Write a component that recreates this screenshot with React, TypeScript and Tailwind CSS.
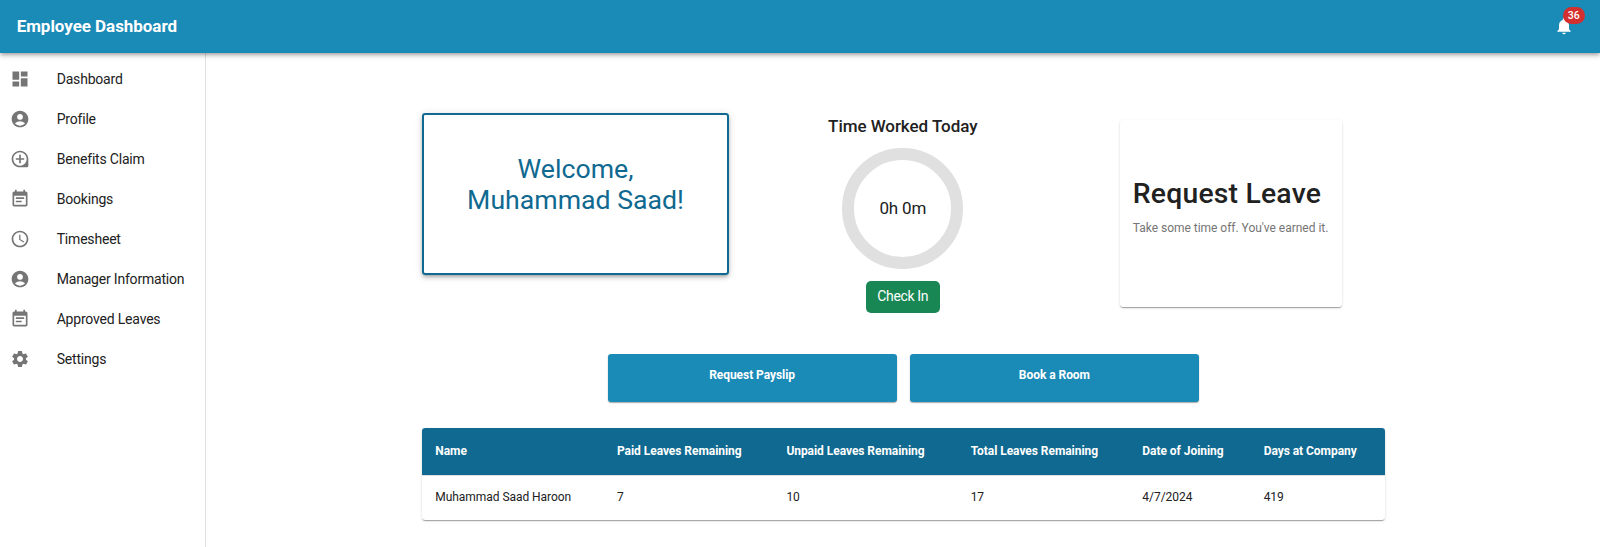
import type { ReactNode } from "react";
import type { IconType } from "react-icons";
import {
  MdAccessTime,
  MdAccountCircle,
  MdDashboard,
  MdEventNote,
  MdLoupe,
  MdNotifications,
  MdSettings,
} from "react-icons/md";

const menu: { label: string; Icon: IconType }[] = [
  { label: "Dashboard", Icon: MdDashboard },
  { label: "Profile", Icon: MdAccountCircle },
  { label: "Benefits Claim", Icon: MdLoupe },
  { label: "Bookings", Icon: MdEventNote },
  { label: "Timesheet", Icon: MdAccessTime },
  { label: "Manager Information", Icon: MdAccountCircle },
  { label: "Approved Leaves", Icon: MdEventNote },
  { label: "Settings", Icon: MdSettings },
];

const columns = [
  { title: "Name", value: "Muhammad Saad Haroon" },
  { title: "Paid Leaves Remaining", value: "7" },
  { title: "Unpaid Leaves Remaining", value: "10" },
  { title: "Total Leaves Remaining", value: "17" },
  { title: "Date of Joining", value: "4/7/2024" },
  { title: "Days at Company", value: "419" },
];

function Header() {
  return (
    <header className="relative z-10 flex h-[52.5px] shrink-0 items-center justify-between bg-[#1a8ab7] pr-[26px] pl-[16.7px] text-white shadow-[0_2px_3px_-1px_rgba(0,0,0,0.2),0_3px_4px_0_rgba(0,0,0,0.14),0_1px_8px_0_rgba(0,0,0,0.12)]">
      <h1 className="text-[17px] font-bold tracking-[-0.003em]">Employee Dashboard</h1>
      <button className="relative size-5" aria-label="Notifications">
        <MdNotifications size={20} />
        <span className="absolute -top-[9px] left-[9px] flex h-[16.67px] w-[21.5px] items-center justify-center rounded-full bg-[#d32f2f] text-[10.5px] font-medium">
          36
        </span>
      </button>
    </header>
  );
}

function Sidebar() {
  return (
    <nav className="w-[206px] shrink-0 border-r border-[#e0e0e0] pt-[6.8px]">
      {menu.map(({ label, Icon }) => (
        <a key={label} className="flex h-10 items-center pl-[10px]">
          <Icon size={20} className="mr-[26.7px] text-[#757575]" />
          <span className="pt-px text-[14px] tracking-[-0.014em]">{label}</span>
        </a>
      ))}
    </nav>
  );
}

function ActionButton({ children }: { children: ReactNode }) {
  return (
    <button className="flex h-[47.5px] w-[289px] justify-center rounded-[3.3px] bg-[#1a8ab7] pt-[12px] text-[12px] leading-[18px] font-bold tracking-[-0.004em] text-white shadow-[0_1px_1px_0_rgba(0,0,0,0.25),0_1px_2px_0_rgba(0,0,0,0.12)]">
      {children}
    </button>
  );
}

export default function App() {
  return (
    <div className="flex h-[547px] flex-col overflow-hidden bg-white font-[Roboto,sans-serif] text-[#212121]">
      <Header />
      <div className="flex grow">
        <Sidebar />
        <main className="flex grow flex-col items-center pt-[60.5px] pl-[0.5px]">
          <div className="flex h-[241px] w-[962.5px] items-start">
            <section className="flex h-[161.7px] w-[307px] flex-col items-center rounded-[3.3px] border-2 border-[#0f6990] pt-[38.5px] text-[26.67px] leading-[31px] text-[#0f6990] shadow-[0_2px_3px_-1px_rgba(0,0,0,0.2),0_3px_4px_0_rgba(0,0,0,0.14),0_1px_8px_0_rgba(0,0,0,0.12)]">
              <span>Welcome,</span>
              <span>Muhammad Saad!</span>
            </section>
            <section className="ml-[92px] flex w-[163.5px] flex-col items-center">
              <h2 className="h-[34.5px] text-[17px] leading-[26px] font-medium tracking-[-0.003em] whitespace-nowrap">
                Time Worked Today
              </h2>
              <div className="flex size-[121px] items-center justify-center rounded-full border-[12px] border-[#e0e0e0] pt-[2px] text-[17px] tracking-[-0.01em]">
                0h 0m
              </div>
              <button className="mt-[12.5px] h-[31.7px] w-[74px] rounded-[5px] bg-[#198754] text-[14px] tracking-[-0.025em] text-white">
                Check In
              </button>
            </section>
            <section className="mt-[6.5px] ml-[135px] flex h-[187.5px] w-[222.5px] flex-col rounded-[3.3px] pt-[56px] pl-[13.3px] whitespace-nowrap shadow-[0_2px_1px_-1px_rgba(0,0,0,0.2),0_1px_1px_0_rgba(0,0,0,0.14),0_1px_3px_0_rgba(0,0,0,0.12)]">
              <h2 className="text-[28.33px] leading-[35px] font-medium tracking-[0.00735em]">Request Leave</h2>
              <p className="mt-[9px] text-[12px] leading-[17px] tracking-[-0.002em] text-[#757575]">
                Take some time off. You've earned it.
              </p>
            </section>
          </div>
          <div className="flex gap-[13.3px]">
            <ActionButton>Request Payslip</ActionButton>
            <ActionButton>Book a Room</ActionButton>
          </div>
          <div className="mt-[26.5px] w-[962.5px] overflow-hidden rounded-[3.3px] text-[12px] tracking-[-0.004em] shadow-[0_2px_1px_-1px_rgba(0,0,0,0.2),0_1px_1px_0_rgba(0,0,0,0.14),0_1px_3px_0_rgba(0,0,0,0.12)]">
            <div className="grid h-[47.5px] grid-cols-[181.7px_169.4px_184.3px_171.7px_121.3px_1fr] items-center border-b border-[#e0e0e0] bg-[#0f6990] pl-[13.3px] font-bold text-white">
              {columns.map((c) => (
                <span key={c.title}>{c.title}</span>
              ))}
            </div>
            <div className="grid h-[44px] grid-cols-[181.7px_169.4px_184.3px_171.7px_121.3px_1fr] items-center pb-[1.5px] pl-[13.3px]">
              {columns.map((c) => (
                <span key={c.title}>{c.value}</span>
              ))}
            </div>
          </div>
        </main>
      </div>
    </div>
  );
}
